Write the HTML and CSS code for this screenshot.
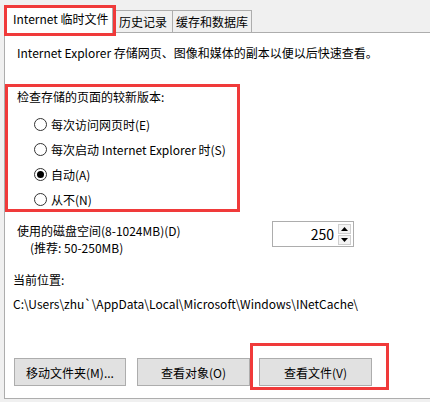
FILE: index.html
```html
<!DOCTYPE html>
<html lang="zh-CN">
<head>
<meta charset="utf-8">
<link rel="stylesheet" href="styles.css">
</head>
<body>
<div class="dialog">
  <div class="tabs">
    <div class="tab active">Internet 临时文件</div>
    <div class="tab">历史记录</div>
    <div class="tab">缓存和数据库</div>
    <div class="mark mark-tab"></div>
  </div>
  <div class="panel">
    <p class="desc">Internet Explorer 存储网页、图像和媒体的副本以便以后快速查看。</p>
    <div class="group">
      <div class="group-title">检查存储的页面的较新版本:</div>
      <label class="radio"><span class="dot"></span>每次访问网页时(E)</label>
      <label class="radio"><span class="dot"></span>每次启动 Internet Explorer 时(S)</label>
      <label class="radio"><span class="dot checked"></span>自动(A)</label>
      <label class="radio"><span class="dot"></span>从不(N)</label>
      <div class="mark mark-group"></div>
    </div>
    <div class="disk">
      <div class="disk-label">
        <div>使用的磁盘空间(8-1024MB)(D)</div>
        <div class="indent">(推荐: 50-250MB)</div>
      </div>
      <div class="spin">
        <div class="spin-value">250</div>
        <div class="spin-btns">
          <div class="spin-btn"><svg width="7" height="4" viewBox="0 0 7 4"><path d="M0 4 L3.5 0 L7 4 Z" fill="#000"/></svg></div>
          <div class="spin-btn"><svg width="7" height="4" viewBox="0 0 7 4"><path d="M0 0 L3.5 4 L7 0 Z" fill="#000"/></svg></div>
        </div>
      </div>
    </div>
    <div class="loc-title">当前位置:</div>
    <div class="loc-path">C:\Users\zhu`\AppData\Local\Microsoft\Windows\INetCache\</div>
    <div class="buttons">
      <div class="btn btn-move">移动文件夹(M)...</div>
      <div class="btn btn-obj">查看对象(O)</div>
      <div class="btn btn-files">查看文件(V)<div class="mark mark-btn"></div></div>
    </div>
  </div>
</div>
</body>
</html>
```
FILE: styles.css
```css
html, body {
  margin: 0;
  padding: 0;
  background: #f0f0f0;
  overflow: hidden;
}
body {
  width: 430px;
  height: 402px;
  font-family: "Noto Sans CJK SC", "Noto Sans", sans-serif;
  font-size: 12px;
  color: #000;
}
.dialog {
  padding-top: 9px;
}
.tabs {
  position: relative;
  display: flex;
  align-items: flex-end;
  height: 23px;
  padding-left: 6px;
}
.tab {
  height: 22px;
  line-height: 21px;
  box-sizing: border-box;
  border: 1px solid #adadad;
  border-bottom: none;
  background: #f0f0f0;
  padding: 0 3px;
  margin-left: -1px;
  white-space: nowrap;
}
.tab.active {
  position: relative;
  z-index: 2;
  height: 26px;
  margin-bottom: -1px;
  line-height: 22px;
  background: #fff;
  padding: 0 6px;
  width: 107px;
  margin-left: 0;
  margin-right: 3px;
}
.tabs .tab:nth-child(2) { width: 58px; }
.tabs .tab:nth-child(3) { width: 80px; }
.panel {
  position: relative;
  margin-left: 4px;
  width: 426px;
  height: 367px;
  box-sizing: border-box;
  border: 1px solid #adadad;
  border-right: none;
  background: #fff;
  display: flex;
  flex-direction: column;
}
.desc {
  margin: 12px 0 0 12px;
  line-height: 16px;
}
.group {
  position: relative;
  margin: 28px 0 0 12px;
}
.group-title {
  line-height: 16px;
}
.radio {
  display: flex;
  align-items: center;
  height: 25px;
  padding-left: 17px;
}
.radio:first-of-type { margin-top: 7px; }
.dot {
  width: 13px;
  height: 13px;
  box-sizing: border-box;
  border: 1px solid #333;
  border-radius: 50%;
  background: #fff;
  margin-right: 4px;
  display: flex;
  align-items: center;
  justify-content: center;
}
.dot.checked::after {
  content: "";
  width: 7px;
  height: 7px;
  border-radius: 50%;
  background: #000;
}
.disk {
  display: flex;
  margin-top: 10px;
  margin-left: 12px;
}
.disk-label {
  line-height: 17px;
  width: 255px;
}
.indent { padding-left: 13px; }
.spin {
  display: flex;
  align-items: center;
  width: 82px;
  height: 26px;
  box-sizing: border-box;
  border: 1px solid #adadad;
  margin-top: -1px;
}
.spin-value {
  flex: 1;
  text-align: right;
  font-size: 14px;
  padding-right: 4px;
}
.spin-btns {
  display: flex;
  flex-direction: column;
  gap: 1px;
  margin-right: 2px;
}
.spin-btn {
  width: 13px;
  height: 10px;
  box-sizing: border-box;
  border: 1px solid #cfcfcf;
  background: #f4f4f4;
  display: flex;
  align-items: center;
  justify-content: center;
}
.loc-title {
  margin: 16px 0 0 8px;
  line-height: 16px;
}
.loc-path {
  margin: 8px 0 0 8px;
  line-height: 16px;
}
.buttons {
  display: flex;
  margin: 46px 0 0 9px;
}
.btn {
  position: relative;
  width: 112px;
  height: 28px;
  box-sizing: border-box;
  border: 1px solid #adadad;
  background: #e1e1e1;
  display: flex;
  align-items: center;
  justify-content: center;
}
.btn-obj { width: 113px; margin-left: 11px; }
.btn-files { width: 113px; margin-left: 9px; }
.mark {
  position: absolute;
  border: 3px solid #f03a3a;
  box-sizing: border-box;
  pointer-events: none;
  z-index: 5;
}
.mark-tab {
  left: 4px;
  top: -4px;
  width: 112px;
  height: 31px;
}
.mark-group {
  left: -12px;
  top: -5px;
  width: 235px;
  height: 128px;
}
.mark-btn {
  left: -10px;
  top: -16px;
  width: 139px;
  height: 47px;
}
```
